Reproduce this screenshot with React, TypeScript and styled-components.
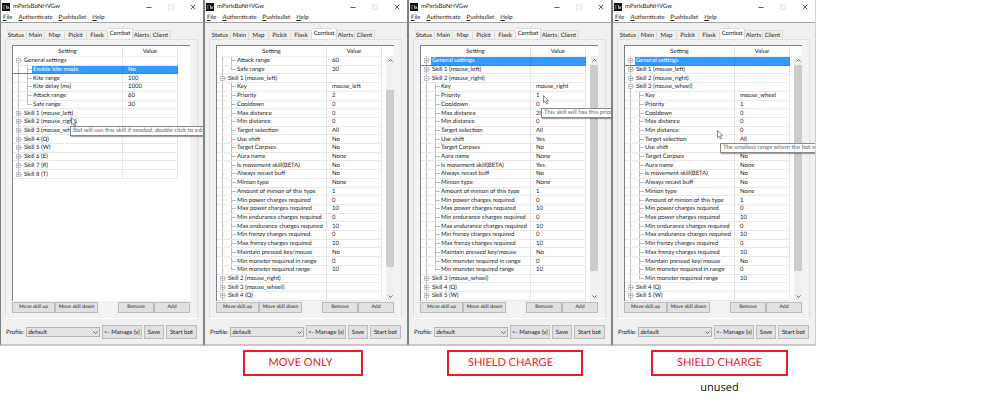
import React from "react";
import styled, { createGlobalStyle, css } from "styled-components";

const GlobalStyle = createGlobalStyle`
  *, *::before, *::after { box-sizing: border-box; }
  html, body { margin: 0; background: #fff; }
  body, button, select {
    font-family: Lato, "Open Sans", sans-serif;
    font-size: 6px;
    line-height: 7px;
    color: #222;
    text-rendering: geometricPrecision;
  }
  button, select { margin: 0; padding: 0; border: 0; border-radius: 0; background: none; }
`;

/* ---------- page ---------- */

const Board = styled.main`
  display: grid;
  grid-template-columns: repeat(4, 20.4%);
  align-items: stretch;
  overflow: hidden;
`;

const Note = styled.div<{ $column: number }>`
  grid-column: ${(p) => p.$column};
  grid-row: 2;
  padding: 4px 0 0 39px;
`;

const NoteBox = styled.p<{ $width: number; $shift?: number }>`
  width: ${(p) => p.$width}px;
  margin: 0;
  padding-right: ${(p) => p.$shift ?? 0}px;
  border: 2px solid #ed1c24;
  color: #ed1c24;
  font-size: 11px;
  line-height: 22px;
  text-align: center;
`;

const NoteText = styled.p`
  width: 137px;
  margin: 4px 0 0;
  color: #111;
  font-family: "Open Sans", sans-serif;
  font-size: 11px;
  line-height: 16px;
  text-align: center;
`;

/* ---------- window frame ---------- */

const Frame = styled.section`
  position: relative;
  display: flex;
  flex-direction: column;
  min-width: 0;
  overflow: hidden;
  background: #f0f0f0;
  border: solid #7d8282;
  border-width: 0 1px;
  border-bottom: 2px solid #c6c8c8;
  &:last-of-type { border-right-color: #d0d0d0; }
`;

const TitleBar = styled.header`
  display: flex;
  align-items: center;
  height: 13px;
  padding: 0 7px 0 1px;
  background: #fff;
`;

const Title = styled.h2`
  flex: 1;
  margin: 0 0 0 3px;
  font-size: 6px;
  font-weight: 400;
`;

const WindowButton = styled.button`
  display: flex;
  width: 6px;
  height: 7px;
  margin-left: 16px;
  align-items: center;
  justify-content: center;
`;

const MenuBar = styled.nav`
  display: flex;
  gap: 6px;
  height: 10px;
  padding-left: 2px;
  background: #fff;
  border-bottom: 1px solid #a4a4a4;
`;

const MenuButton = styled.button`
  height: 9px;
  &::first-letter { text-decoration: underline; }
`;

const Body = styled.div`
  flex: 1;
  display: flex;
  flex-direction: column;
  padding: 5px 5px 5px 4px;
`;

const Tabs = styled.div`
  display: grid;
  grid-template-columns: 21fr 18fr 20fr 22fr 21fr 25fr 18fr 20fr;
  align-items: end;
  margin: 0 27px 0 1px;
`;

const Tab = styled.button<{ $active: boolean }>`
  height: 9px;
  border: 1px solid #dcdcdc;
  border-width: 1px 1px 0 0;
  background: #f0f0f0;
  ${(p) => p.$active && css`
    height: 11px;
    background: #fff;
    padding-bottom: 1px;
  `}
`;

const Pane = styled.div`
  flex: 1;
  display: flex;
  flex-direction: column;
  padding: 5px 7px 5px 6px;
  border: 1px solid #e0e0e0;
  border-bottom-color: #fff;
  background: #f2f2f2;
`;

/* ---------- settings tree ---------- */

const TreeView = styled.div`
  flex: 1;
  display: flex;
  align-items: flex-start;
  margin-bottom: 1px;
  background: #fff;
  border-top: 1px solid #7c7f83;
  border-left: 1px solid #7c7f83;
`;

const Table = styled.table<{ $half: boolean }>`
  width: 165px;
  height: ${(p) => (p.$half ? 133 : 255)}px;
  border-spacing: 0;
  table-layout: fixed;
`;

const HeadCell = styled.th`
  height: 11px;
  padding: 0;
  font-weight: 400;
  border-right: 1px solid #e4e4e4;
  border-bottom: 1px solid #f0f0f0;
  &:first-child { width: 110px; }
`;

type Kind = "group" | "child";

const NameCell = styled.td<{ $kind: Kind; $selected: boolean; $last: boolean; $end: boolean }>`
  padding: 0;
  border-right: 1px solid #e4e4e4;
  border-bottom: 1px solid #e8e8e8;
  ${(p) => {
    const edge = p.$kind === "group" ? 10 : 19;
    const fill = p.$selected ? "#3399ff" : "transparent";
    const line = "linear-gradient(#bcbcbc, #bcbcbc)";
    const trunk = `${line} 5px 0 / 1px ${p.$end ? "50%" : "100%"} no-repeat`;
    const branch = `${line} 14px 0 / 1px ${p.$last ? "50%" : "100%"} no-repeat`;
    const tick = `${line} ${p.$kind === "group" ? 5 : 14}px 50% / ${p.$kind === "group" ? 4 : 5}px 1px no-repeat`;
    const bar = `linear-gradient(${fill}, ${fill}) ${edge}px 0 / 200px 100% no-repeat`;
    return css`
      background: ${trunk}, ${tick}, ${p.$kind === "child" ? `${branch}, ` : ""}${bar};
      ${p.$selected && css`color: #fff; border-color: #3a8ad8;`}
    `;
  }}
`;

const NameLine = styled.div<{ $kind: Kind }>`
  display: flex;
  align-items: center;
  gap: 3px;
  padding-left: ${(p) => (p.$kind === "group" ? 3 : 20)}px;
  white-space: nowrap;
`;

const Toggle = styled.button`
  display: flex;
  width: 5px;
  height: 5px;
`;

const ValueCell = styled.td<{ $selected: boolean }>`
  padding: 0 0 0 5px;
  border-right: 1px solid #e4e4e4;
  border-bottom: 1px solid #e8e8e8;
  white-space: nowrap;
  ${(p) => p.$selected && css`background: #3399ff; color: #fff; border-color: #3a8ad8;`}
`;

const ScrollBar = styled.div`
  align-self: stretch;
  display: flex;
  flex-direction: column;
  align-items: stretch;
  width: 8px;
  margin: 10px 0 0 auto;
  background: #f0f0f0;
`;

const ScrollButton = styled.button`
  display: flex;
  align-items: center;
  justify-content: center;
  height: 9px;
`;

const ScrollTrack = styled.div<{ $before: number; $after: number }>`
  flex: 1;
  display: flex;
  padding: ${(p) => p.$before}px 0 ${(p) => p.$after}px;
  &::before { content: ""; flex: 1; background: #cdcdcd; }
`;

/* ---------- bottom controls ---------- */

const PushButton = styled.button<{ $width: number; $tall?: boolean }>`
  width: ${(p) => p.$width}px;
  height: ${(p) => (p.$tall ? 14 : 11)}px;
  border: 1px solid #bcbcbc;
  background: #e1e1e1;
  white-space: nowrap;
`;

const ButtonRow = styled.div`
  display: flex;
  ${PushButton} { font-size: 5px; }
`;

const Spacer = styled.span`
  flex: 1;
`;

const Footer = styled.div`
  display: flex;
  align-items: center;
  gap: 2px;
  margin-top: 6px;
  padding: 0 1px;
`;

const SelectWrap = styled.span`
  flex: 1;
  display: grid;
  align-items: center;
  > * { grid-area: 1 / 1; }
  > svg { justify-self: end; margin-right: 2px; pointer-events: none; }
`;

const Select = styled.select`
  appearance: none;
  width: 100%;
  height: 10px;
  padding-left: 1px;
  border: 1px solid #b4b4b4;
  background: #e3e3e3;
`;

/* ---------- overlays ---------- */

const Tooltip = styled.div<{ $x: number; $y: number }>`
  position: absolute;
  left: ${(p) => p.$x}px;
  top: ${(p) => p.$y}px;
  height: 10px;
  padding: 0 2px;
  border: 1px solid #8a8a8a;
  background: #fff;
  box-shadow: 1px 1px 1px rgba(0, 0, 0, 0.35);
  color: #666;
  line-height: 8px;
  white-space: nowrap;
`;

const Pointer = styled.svg<{ $x: number; $y: number }>`
  position: absolute;
  left: ${(p) => p.$x}px;
  top: ${(p) => p.$y}px;
`;

/* ---------- data ---------- */

type Row = { name: string; value?: string; kind: Kind; open?: boolean; selected?: boolean; last?: boolean };

const group = (name: string, open = false, selected = false): Row => ({ name, kind: "group", open, selected });
const children = (pairs: string[][], selected = -1): Row[] =>
  pairs.map(([name, value], i) => ({
    name, value, kind: "child", selected: i === selected, last: i === pairs.length - 1,
  }));

const skill = (key: string, priority: string, maxDistance: string, shift: string, movement: string) =>
  children([
    ["Key", key],
    ["Priority", priority],
    ["Cooldown", "0"],
    ["Max distance", maxDistance],
    ["Min distance", "0"],
    ["Target selection", "All"],
    ["Use shift", shift],
    ["Target Corpses", "No"],
    ["Aura name", "None"],
    ["Is movement skill(BETA)", movement],
    ["Always recast buff", "No"],
    ["Minion type", "None"],
    ["Amount of minion of this type", "1"],
    ["Min power charges required", "0"],
    ["Max power charges required", "10"],
    ["Min endurance charges required", "0"],
    ["Max endurance charges required", "10"],
    ["Min frenzy charges required", "0"],
    ["Max frenzy charges required", "10"],
    ["Maintain pressed key/mouse", "No"],
    ["Min monster required in range", "0"],
    ["Min monster required range", "10"],
  ]);

const S1 = "Skill 1 (mouse_left)";
const S2 = "Skill 2 (mouse_right)";
const S3 = "Skill 3 (mouse_wheel)";

type Win = {
  rows: Row[];
  scroll?: [number, number];
  tip?: { x: number; y: number; text: string };
  pointer?: { x: number; y: number };
};

const windows: Win[] = [
  {
    rows: [
      group("General settings", true),
      ...children([["Enable kite mode", "No"], ["Kite range", "100"], ["Kite delay (ms)", "1000"], ["Attack range", "60"], ["Safe range", "30"]], 0),
      ...[S1, S2, S3, "Skill 4 (Q)", "Skill 5 (W)", "Skill 6 (E)", "Skill 7 (R)", "Skill 8 (T)"].map((n) => group(n)),
    ],
    tip: { x: 69, y: 126, text: "Bot will use this skill if needed, double click to edit a" },
    pointer: { x: 70, y: 117 },
  },
  {
    rows: [
      ...children([["Attack range", "60"], ["Safe range", "30"]]),
      group(S1, true),
      ...skill("mouse_left", "2", "0", "No", "No"),
      group(S2), group(S3), group("Skill 4 (Q)"),
    ],
    scroll: [25, 25],
  },
  {
    rows: [
      group("General settings", false, true), group(S1), group(S2, true),
      ...skill("mouse_right", "1", "20", "Yes", "Yes"),
      group(S3), group("Skill 4 (Q)"), group("Skill 5 (W)"),
    ],
    scroll: [0, 21],
    tip: { x: 132, y: 108, text: "This skill will has this priority" },
    pointer: { x: 134, y: 95 },
  },
  {
    rows: [
      group("General settings", false, true), group(S1), group(S2), group(S3, true),
      ...skill("mouse_wheel", "1", "0", "No", "No"),
      group("Skill 4 (Q)"), group("Skill 5 (W)"),
    ],
    scroll: [0, 21],
    tip: { x: 107, y: 143, text: "The smallest range where the bot will" },
    pointer: { x: 104, y: 130 },
  },
];

const tabs = ["Status", "Main", "Map", "Pickit", "Flask", "Combat", "Alerts", "Client"];
const menus = ["File", "Authenticate", "Pushbullet", "Help"];

/* ---------- icons ---------- */

const AppIcon = () => (
  <svg width="8" height="8" viewBox="0 0 8 8" aria-hidden="true">
    <rect width="8" height="8" fill="#0b0b0b" />
    <path d="M1.3 2.2v3.8M1.3 2.3h1.8M1.3 4h1.4M1.3 5.9h1.8" stroke="#8b8b68" strokeWidth=".7" />
    <path d="M4.6 2.2v3.6M5.5 3.6l1.5 2.2M7 3.6L5.5 5.8" stroke="#eee" strokeWidth=".8" />
  </svg>
);

const Chevron = ({ up = false }: { up?: boolean }) => (
  <svg width="5" height="5" viewBox="0 0 5 5" fill="none" aria-hidden="true">
    <path d={up ? "M.5 3.5l2-2 2 2" : "M.5 1.5l2 2 2-2"} stroke="#555" strokeWidth=".9" />
  </svg>
);

const Box = ({ open }: { open: boolean }) => (
  <svg width="5" height="5" viewBox="0 0 5 5" aria-hidden="true">
    <rect x=".5" y=".5" width="4" height="4" fill="#fff" stroke="#b8b8b8" strokeWidth=".8" />
    <path d={open ? "M1.3 2.5h2.4" : "M1.3 2.5h2.4M2.5 1.3v2.4"} stroke="#6d86bd" strokeWidth=".7" />
  </svg>
);

/* ---------- components ---------- */

function SettingsTree({ rows, scroll }: { rows: Row[]; scroll?: [number, number] }) {
  return (
    <TreeView>
      <Table $half={rows.length <= 14}>
        <thead>
          <tr>
            <HeadCell scope="col">Setting</HeadCell>
            <HeadCell scope="col">Value</HeadCell>
          </tr>
        </thead>
        <tbody>
          {rows.map((r, i) => (
            <tr key={i}>
              <NameCell $kind={r.kind} $selected={!!r.selected} $last={!!r.last} $end={!scroll && i === rows.length - 1}>
                <NameLine $kind={r.kind}>
                  {r.kind === "group" && (
                    <Toggle type="button" aria-expanded={!!r.open} aria-label={r.name}>
                      <Box open={!!r.open} />
                    </Toggle>
                  )}
                  <span>{r.name}</span>
                </NameLine>
              </NameCell>
              <ValueCell $selected={!!r.selected}>{r.value}</ValueCell>
            </tr>
          ))}
        </tbody>
      </Table>
      {scroll && (
        <ScrollBar>
          <ScrollButton type="button" aria-label="Scroll up"><Chevron up /></ScrollButton>
          <ScrollTrack $before={scroll[0]} $after={scroll[1]} />
          <ScrollButton type="button" aria-label="Scroll down"><Chevron /></ScrollButton>
        </ScrollBar>
      )}
    </TreeView>
  );
}

function BotWindow({ win, id }: { win: Win; id: string }) {
  return (
    <Frame>
      <TitleBar>
        <AppIcon />
        <Title>mPxrlsBoNHVGw</Title>
        <WindowButton type="button" aria-label="Minimize">
          <svg width="6" height="6" viewBox="0 0 6 6"><path d="M.5 3.5h5" stroke="#333" strokeWidth=".8" /></svg>
        </WindowButton>
        <WindowButton type="button" aria-label="Maximize">
          <svg width="6" height="6" viewBox="0 0 6 6"><rect x=".5" y="1" width="5" height="4.5" fill="none" stroke="#ddd" strokeWidth=".8" /></svg>
        </WindowButton>
        <WindowButton type="button" aria-label="Close">
          <svg width="6" height="6" viewBox="0 0 6 6"><path d="M.7 .7l4.6 4.6M5.3 .7L.7 5.3" stroke="#333" strokeWidth=".8" /></svg>
        </WindowButton>
      </TitleBar>
      <MenuBar>
        {menus.map((m) => <MenuButton key={m} type="button">{m}</MenuButton>)}
      </MenuBar>
      <Body>
        <Tabs role="tablist">
          {tabs.map((t) => (
            <Tab key={t} type="button" role="tab" aria-selected={t === "Combat"} $active={t === "Combat"}>{t}</Tab>
          ))}
        </Tabs>
        <Pane>
          <SettingsTree rows={win.rows} scroll={win.scroll} />
          <ButtonRow>
            <PushButton type="button" $width={43}>Move skill up</PushButton>
            <PushButton type="button" $width={43}>Move skill down</PushButton>
            <Spacer />
            <PushButton type="button" $width={36}>Remove</PushButton>
            <PushButton type="button" $width={36}>Add</PushButton>
          </ButtonRow>
        </Pane>
        <Footer>
          <label htmlFor={id}>Profile:</label>
          <SelectWrap>
            <Select id={id} defaultValue="default"><option>default</option></Select>
            <Chevron />
          </SelectWrap>
          <PushButton type="button" $tall $width={40}>&lt;- Manage (v)</PushButton>
          <PushButton type="button" $tall $width={20}>Save</PushButton>
          <PushButton type="button" $tall $width={31}>Start bot</PushButton>
        </Footer>
      </Body>
      {win.tip && <Tooltip role="tooltip" $x={win.tip.x} $y={win.tip.y}>{win.tip.text}</Tooltip>}
      {win.pointer && (
        <Pointer $x={win.pointer.x} $y={win.pointer.y} width="7" height="10" viewBox="0 0 7 10" aria-hidden="true">
          <path d="M.5 .5v7.3l1.7-1.6 1.2 2.9 1.2-.5-1.2-2.8h2.2z" fill="#fff" stroke="#444" strokeWidth=".6" />
        </Pointer>
      )}
    </Frame>
  );
}

export default function App() {
  return (
    <>
      <GlobalStyle />
      <Board>
        {windows.map((w, i) => <BotWindow key={i} win={w} id={`profile-${i}`} />)}
        <Note $column={2}><NoteBox $width={120} $shift={5}>MOVE ONLY</NoteBox></Note>
        <Note $column={3}><NoteBox $width={136} $shift={9}>SHIELD CHARGE</NoteBox></Note>
        <Note $column={4}>
          <NoteBox $width={137}>SHIELD CHARGE</NoteBox>
          <NoteText>unused</NoteText>
        </Note>
      </Board>
    </>
  );
}
